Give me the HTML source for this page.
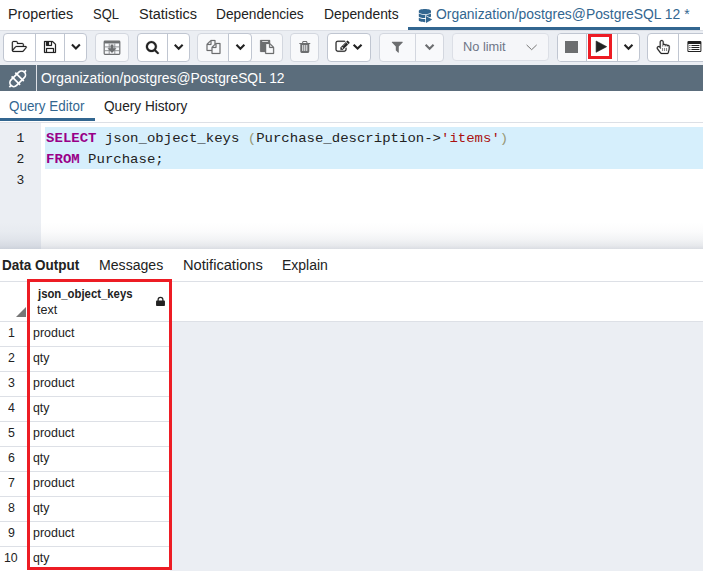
<!DOCTYPE html>
<html><head><meta charset="utf-8"><title>pgAdmin</title><style>
*{box-sizing:border-box;margin:0;padding:0}
html,body{width:703px;height:571px;overflow:hidden;background:#fff}
body{position:relative;font-family:"Liberation Sans",sans-serif;color:#222;font-size:14px}
.abs{position:absolute}
.ic{position:absolute;display:block;overflow:visible}
.t{position:absolute;white-space:nowrap;line-height:1}
.tab{font-size:14px;top:7px;color:#222}
.tab.act{color:#326690}
#toolbar{left:0;top:30px;width:703px;height:35px;background:#ebeef3;border-top:1px solid #dde0e6}
.grp{position:absolute;top:33px;height:29px;background:#fff;border:1px solid #c0c6d1;border-radius:4px}
.grp.dis{background:#f8f9fb;border-color:#d3d7df}
.dv{position:absolute;top:33px;height:29px;width:1px;background:#c0c6d1}
.dv.dis{background:#d3d7df}
#titlebar{left:0;top:65px;width:703px;height:26px;background:#5b6d7c}
#titlebar .sep{position:absolute;left:36px;top:0;width:1px;height:26px;background:#dde0e6}
#gutter{left:0;top:123px;width:41px;height:126px;background:#ebeef3}
.ln{position:absolute;left:0;width:24.4px;text-align:right;font-family:"Liberation Mono",monospace;font-size:13px;line-height:21px;color:#222}
.code{position:absolute;left:46.1px;transform:scaleY(0.94);transform-origin:0 14.24px;font-family:"Liberation Mono",monospace;font-size:14px;line-height:21px;white-space:pre;color:#222}
.kw{color:#908;font-weight:bold}
.br{color:#997}
.st{color:#a11}
.sel{position:absolute;left:45px;width:658px;background:#d6effc}
#shade{left:0;top:222px;width:703px;height:27px;background:linear-gradient(to bottom,rgba(132,142,160,0) 0%,rgba(132,142,160,0.03) 35%,rgba(132,142,160,0.10) 65%,rgba(132,142,160,0.20) 88%,rgba(132,142,160,0.30) 100%)}
.otab{font-size:14px;top:258px}
#grid{left:0;top:282px;width:703px;height:289px;background:#ebeef3}
.hl{position:absolute;height:1px;background:#dde0e6}
.cell{position:absolute;background:#fff;border-bottom:1px solid #dde0e6}
.rn{position:absolute;left:0;width:22.5px;text-align:center;font-size:12.4px;line-height:25px;color:#222}
.cv{position:absolute;left:33.5px;font-size:12.4px;line-height:25px;color:#222}
.red{position:absolute;border:3px solid #ed1c24}
</style></head><body>
<div class="t" style="left:8.33px;top:7.15px;font-size:14px;color:#222;transform:scaleX(1.0217);transform-origin:0 0">Properties</div>
<div class="t" style="left:92.92px;top:7.15px;font-size:14px;color:#222;transform:scaleX(0.9245);transform-origin:0 0">SQL</div>
<div class="t" style="left:138.55px;top:7.15px;font-size:14px;color:#222;transform:scaleX(1.0368);transform-origin:0 0">Statistics</div>
<div class="t" style="left:216.38px;top:7.15px;font-size:14px;color:#222;transform:scaleX(0.9789);transform-origin:0 0">Dependencies</div>
<div class="t" style="left:323.86px;top:7.15px;font-size:14px;color:#222;transform:scaleX(0.9884);transform-origin:0 0">Dependents</div>
<div class="t" style="left:436.35px;top:7.15px;font-size:14px;color:#326690;transform:scaleX(0.9915);transform-origin:0 0">Organization/postgres@PostgreSQL 12 *</div>
<svg class="ic" style="left:417px;top:8px;width:15px;height:16px" viewBox="417 8 15 16"><path fill="#326690" transform="translate(418.8 9.1) scale(0.027232 0.025586)" d="M448 73.143v45.714C448 159.143 347.667 192 224 192S0 159.143 0 118.857V73.143C0 32.857 100.333 0 224 0s224 32.857 224 73.143zM448 176v102.857C448 319.143 347.667 352 224 352S0 319.143 0 278.857V176c48.125 33.143 136.208 48.572 224 48.572S399.874 209.143 448 176zm0 160v102.857C448 479.143 347.667 512 224 512S0 479.143 0 438.857V336c48.125 33.143 136.208 48.572 224 48.572S399.874 369.143 448 336z"/></svg>
<svg class="ic" style="left:423px;top:13px;width:12px;height:13px" viewBox="423 13 12 13"><path d="M426 16.1 L432.2 19.5 L426 22.9Z" fill="#326690" stroke="#fff" stroke-width="1.5" stroke-linejoin="miter" paint-order="stroke"/></svg>
<div class="abs" style="left:408px;top:27px;width:292px;height:3px;background:#326690"></div>
<div class="abs" id="toolbar"></div>
<div class="grp" style="left:3px;width:84px"></div>
<div class="dv" style="left:35px"></div>
<div class="dv" style="left:64px"></div>
<div class="grp dis" style="left:95px;width:34px"></div>
<div class="grp" style="left:137px;width:53px"></div>
<div class="dv" style="left:167px"></div>
<div class="grp dis" style="left:197px;width:86px"></div>
<div class="grp dis" style="left:290px;width:29px"></div>
<div class="grp" style="left:327px;width:44px"></div>
<div class="grp dis" style="left:379px;width:65px"></div>
<div class="dv dis" style="left:415px"></div>
<div class="grp" style="left:557px;width:83px"></div>
<div class="dv" style="left:586px"></div>
<div class="dv" style="left:617px"></div>
<div class="grp" style="left:647px;width:73px"></div>
<div class="dv" style="left:678px"></div>
<div class="abs" style="left:228px;top:33px;width:24px;height:29px;background:#fff;border:1px solid #c0c6d1;border-radius:0 4px 4px 0"></div>
<div class="abs" style="left:452px;top:33px;width:97px;height:28px;background:#f5f6f9;border:1px solid #dcdfe6;border-radius:4px"></div>
<svg class="ic" style="left:10px;top:39px;width:18px;height:14px" viewBox="10 39 18 14"><path fill="#222" stroke="#222" stroke-width="30" stroke-linejoin="round" transform="translate(11.843 51.900) scale(0.007812 -0.007812)" d="M1781 605q0 35 -53 35h-1088q-40 0 -85.5 -21.5t-71.5 -52.5l-294 -363q-18 -24 -18 -40q0 -35 53 -35h1088q40 0 86 22t71 53l294 363q18 22 18 39zM640 768h768v160q0 40 -28 68t-68 28h-576q-40 0 -68 28t-28 68v64q0 40 -28 68t-68 28h-320q-40 0 -68 -28t-28 -68 v-853l256 315q44 53 116 87.5t140 34.5zM1909 605q0 -62 -46 -120l-295 -363q-43 -53 -116 -87.5t-140 -34.5h-1088q-92 0 -158 66t-66 158v960q0 92 66 158t158 66h320q92 0 158 -66t66 -158v-32h544q92 0 158 -66t66 -158v-160h192q54 0 99 -24.5t67 -70.5q15 -32 15 -68z "/></svg>
<svg class="ic" style="left:43px;top:39px;width:14px;height:15px" viewBox="43 39 14 15"><path fill="#222" stroke="#222" stroke-width="30" stroke-linejoin="round" transform="translate(44.000 51.900) scale(0.007812 -0.007812)" d="M384 0h768v384h-768v-384zM1280 0h128v896q0 14 -10 38.5t-20 34.5l-281 281q-10 10 -34 20t-39 10v-416q0 -40 -28 -68t-68 -28h-576q-40 0 -68 28t-28 68v416h-128v-1280h128v416q0 40 28 68t68 28h832q40 0 68 -28t28 -68v-416zM896 928v320q0 13 -9.5 22.5t-22.5 9.5 h-192q-13 0 -22.5 -9.5t-9.5 -22.5v-320q0 -13 9.5 -22.5t22.5 -9.5h192q13 0 22.5 9.5t9.5 22.5zM1536 896v-928q0 -40 -28 -68t-68 -28h-1344q-40 0 -68 28t-28 68v1344q0 40 28 68t68 28h928q40 0 88 -20t76 -48l280 -280q28 -28 48 -76t20 -88z"/></svg>
<svg class="ic" style="left:69px;top:42px;width:13px;height:10px" viewBox="69 42 13 10"><path d="M71.95 44.55 L75.90 48.50 L79.85 44.55" fill="none" stroke="#222" stroke-width="2.1" stroke-linejoin="miter"/></svg>
<svg class="ic" style="left:102px;top:39px;width:20px;height:18px" viewBox="102 39 20 18"><g transform="translate(103.6 40.6)"><g fill="none" stroke="#6c6e70"><rect x="0.6" y="0.6" width="15.6" height="13.2" rx="0.8" stroke-width="1.2"/><path d="M0.6 1.7 H16.2" stroke-width="2.3"/><path d="M0.6 6.3 H16.2 M0.6 10.1 H16.2 M5.6 3 V13.8 M11.2 3 V13.8" stroke-width="0.9" stroke="#85878a"/></g><path d="M7.0 3.8 H9.8 V7.6 H12.9 L8.4 12.4 L3.9 7.6 H7.0Z" fill="#6c6e70"/></g></svg>
<svg class="ic" style="left:144px;top:40px;width:16px;height:16px" viewBox="144 40 16 16"><path fill="#222" stroke="#222" stroke-width="30" stroke-linejoin="round" transform="translate(145.900 52.100) scale(0.007812 -0.007812)" d="M1152 704q0 185 -131.5 316.5t-316.5 131.5t-316.5 -131.5t-131.5 -316.5t131.5 -316.5t316.5 -131.5t316.5 131.5t131.5 316.5zM1664 -128q0 -52 -38 -90t-90 -38q-54 0 -90 38l-343 342q-179 -124 -399 -124q-143 0 -273.5 55.5t-225 150t-150 225t-55.5 273.5 t55.5 273.5t150 225t225 150t273.5 55.5t273.5 -55.5t225 -150t150 -225t55.5 -273.5q0 -220 -124 -399l343 -343q37 -37 37 -90z"/></svg>
<svg class="ic" style="left:172px;top:42px;width:13px;height:10px" viewBox="172 42 13 10"><path d="M174.75 44.75 L178.70 48.70 L182.65 44.75" fill="none" stroke="#222" stroke-width="2.1" stroke-linejoin="miter"/></svg>
<svg class="ic" style="left:205px;top:38px;width:17px;height:17px" viewBox="205 38 17 17"><path fill="#6c6e70" stroke="#6c6e70" stroke-width="30" stroke-linejoin="round" transform="translate(206.500 51.900) scale(0.007812 -0.007812)" d="M1696 1152q40 0 68 -28t28 -68v-1216q0 -40 -28 -68t-68 -28h-960q-40 0 -68 28t-28 68v288h-544q-40 0 -68 28t-28 68v672q0 40 20 88t48 76l408 408q28 28 76 48t88 20h416q40 0 68 -28t28 -68v-328q68 40 128 40h416zM1152 939l-299 -299h299v299zM512 1323l-299 -299 h299v299zM708 676l316 316v416h-384v-416q0 -40 -28 -68t-68 -28h-416v-640h512v256q0 40 20 88t48 76zM1664 -128v1152h-384v-416q0 -40 -28 -68t-68 -28h-416v-640h896z"/></svg>
<svg class="ic" style="left:234px;top:42px;width:13px;height:10px" viewBox="234 42 13 10"><path d="M236.45 44.85 L240.40 48.80 L244.35 44.85" fill="none" stroke="#222" stroke-width="2.1" stroke-linejoin="miter"/></svg>
<svg class="ic" style="left:259px;top:38px;width:17px;height:17px" viewBox="259 38 17 17"><path fill="#6c6e70" stroke="#6c6e70" stroke-width="30" stroke-linejoin="round" transform="translate(260.100 51.900) scale(0.007812 -0.007812)" d="M768 -128h896v640h-416q-40 0 -68 28t-28 68v416h-384v-1152zM1024 1312v64q0 13 -9.5 22.5t-22.5 9.5h-704q-13 0 -22.5 -9.5t-9.5 -22.5v-64q0 -13 9.5 -22.5t22.5 -9.5h704q13 0 22.5 9.5t9.5 22.5zM1280 640h299l-299 299v-299zM1792 512v-672q0 -40 -28 -68t-68 -28 h-960q-40 0 -68 28t-28 68v160h-544q-40 0 -68 28t-28 68v1344q0 40 28 68t68 28h1088q40 0 68 -28t28 -68v-328q21 -13 36 -28l408 -408q28 -28 48 -76t20 -88z"/></svg>
<svg class="ic" style="left:298px;top:39px;width:14px;height:15px" viewBox="298 39 14 15"><path fill="#6c6e70" transform="translate(299.300 51.900) scale(0.007812 -0.007812)" d="M512 160v704q0 14 -9 23t-23 9h-64q-14 0 -23 -9t-9 -23v-704q0 -14 9 -23t23 -9h64q14 0 23 9t9 23zM768 160v704q0 14 -9 23t-23 9h-64q-14 0 -23 -9t-9 -23v-704q0 -14 9 -23t23 -9h64q14 0 23 9t9 23zM1024 160v704q0 14 -9 23t-23 9h-64q-14 0 -23 -9t-9 -23v-704 q0 -14 9 -23t23 -9h64q14 0 23 9t9 23zM480 1152h448l-48 117q-7 9 -17 11h-317q-10 -2 -17 -11zM1408 1120v-64q0 -14 -9 -23t-23 -9h-96v-948q0 -83 -47 -143.5t-113 -60.5h-832q-66 0 -113 58.5t-47 141.5v952h-96q-14 0 -23 9t-9 23v64q0 14 9 23t23 9h309l70 167 q15 37 54 63t79 26h320q40 0 79 -26t54 -63l70 -167h309q14 0 23 -9t9 -23z"/></svg>
<svg class="ic" style="left:334px;top:39px;width:17px;height:14px" viewBox="334 39 17 14"><path fill="#222" stroke="#222" stroke-width="30" stroke-linejoin="round" transform="translate(335.531 51.700) scale(0.007812 -0.007812)" d="M888 352l116 116l-152 152l-116 -116v-56h96v-96h56zM1328 1072q-16 16 -33 -1l-350 -350q-17 -17 -1 -33t33 1l350 350q17 17 1 33zM1408 478v-190q0 -119 -84.5 -203.5t-203.5 -84.5h-832q-119 0 -203.5 84.5t-84.5 203.5v832q0 119 84.5 203.5t203.5 84.5h832 q63 0 117 -25q15 -7 18 -23q3 -17 -9 -29l-49 -49q-14 -14 -32 -8q-23 6 -45 6h-832q-66 0 -113 -47t-47 -113v-832q0 -66 47 -113t113 -47h832q66 0 113 47t47 113v126q0 13 9 22l64 64q15 15 35 7t20 -29zM1312 1216l288 -288l-672 -672h-288v288zM1756 1084l-92 -92 l-288 288l92 92q28 28 68 28t68 -28l152 -152q28 -28 28 -68t-28 -68z"/></svg>
<svg class="ic" style="left:351px;top:42px;width:13px;height:10px" viewBox="351 42 13 10"><path d="M353.65 44.65 L357.60 48.60 L361.55 44.65" fill="none" stroke="#222" stroke-width="2.1" stroke-linejoin="miter"/></svg>
<svg class="ic" style="left:390px;top:40px;width:14px;height:14px" viewBox="390 40 14 14"><path fill="#6c6e70" transform="translate(391.800 51.700) scale(0.007812 -0.007812)" d="M1403 1241q17 -41 -14 -70l-493 -493v-742q0 -42 -39 -59q-13 -5 -25 -5q-27 0 -45 19l-256 256q-19 19 -19 45v486l-493 493q-31 29 -14 70q17 39 59 39h1280q42 0 59 -39z"/></svg>
<svg class="ic" style="left:423px;top:42px;width:13px;height:10px" viewBox="423 42 13 10"><path d="M425.65 44.85 L429.60 48.80 L433.55 44.85" fill="none" stroke="#6c6e70" stroke-width="2.1" stroke-linejoin="miter"/></svg>
<div class="t" style="left:462.75px;top:41.24px;font-size:12px;color:#6e7587;transform:scaleX(1.0660);transform-origin:0 0">No limit</div>
<svg class="ic" style="left:524px;top:42px;width:16px;height:11px" viewBox="524 42 16 11"><path d="M526.6 44.9 L531.65 49.7 L536.7 44.9" fill="none" stroke="#777" stroke-width="1"/></svg>
<div class="abs" style="left:558px;top:34px;width:28px;height:27px;background:#f8f9fb;border-radius:3px 0 0 3px"></div>
<div class="abs" style="left:565px;top:41px;width:12.5px;height:12px;background:#6c6e70"></div>
<svg class="ic" style="left:594px;top:39px;width:15px;height:16px" viewBox="594 39 15 16"><path d="M596.1 41 L606.7 46.65 L596.1 52.3Z" fill="#222" stroke="#222" stroke-width="0.6" stroke-linejoin="round"/></svg>
<svg class="ic" style="left:622px;top:42px;width:13px;height:10px" viewBox="622 42 13 10"><path d="M624.55 44.75 L628.50 48.70 L632.45 44.75" fill="none" stroke="#222" stroke-width="2.1" stroke-linejoin="miter"/></svg>
<svg class="ic" style="left:655px;top:39px;width:16px;height:16px" viewBox="655 39 16 16"><path fill="#222" stroke="#222" stroke-width="30" stroke-linejoin="round" transform="translate(656.700 52.000) scale(0.007812 -0.007812)" d="M640 1408q-53 0 -90.5 -37.5t-37.5 -90.5v-512v-384l-151 202q-41 54 -107 54q-52 0 -89 -38t-37 -90q0 -43 26 -77l384 -512q38 -51 102 -51h718q22 0 39.5 13.5t22.5 34.5l92 368q24 96 24 194v217q0 41 -28 71t-68 30t-68 -28t-28 -68h-32v61q0 48 -32 81.5t-80 33.5 q-46 0 -79 -33t-33 -79v-64h-32v90q0 55 -37 94.5t-91 39.5q-53 0 -90.5 -37.5t-37.5 -90.5v-96h-32v570q0 55 -37 94.5t-91 39.5zM640 1536q107 0 181.5 -77.5t74.5 -184.5v-220q22 2 32 2q99 0 173 -69q47 21 99 21q113 0 184 -87q27 7 56 7q94 0 159 -67.5t65 -161.5 v-217q0 -116 -28 -225l-92 -368q-16 -64 -68 -104.5t-118 -40.5h-718q-60 0 -114.5 27.5t-90.5 74.5l-384 512q-51 68 -51 154q0 105 74.5 180.5t179.5 75.5q71 0 130 -35v547q0 106 75 181t181 75zM768 128v384h-32v-384h32zM1024 128v384h-32v-384h32zM1280 128v384h-32 v-384h32z"/></svg>
<svg class="ic" style="left:686px;top:40px;width:17px;height:13px" viewBox="686 40 17 13"><path fill="#222" transform="translate(687.400 52.000) scale(0.007812 -0.007812)" d="M384 352v-64q0 -13 -9.5 -22.5t-22.5 -9.5h-64q-13 0 -22.5 9.5t-9.5 22.5v64q0 13 9.5 22.5t22.5 9.5h64q13 0 22.5 -9.5t9.5 -22.5zM384 608v-64q0 -13 -9.5 -22.5t-22.5 -9.5h-64q-13 0 -22.5 9.5t-9.5 22.5v64q0 13 9.5 22.5t22.5 9.5h64q13 0 22.5 -9.5t9.5 -22.5z M384 864v-64q0 -13 -9.5 -22.5t-22.5 -9.5h-64q-13 0 -22.5 9.5t-9.5 22.5v64q0 13 9.5 22.5t22.5 9.5h64q13 0 22.5 -9.5t9.5 -22.5zM1536 352v-64q0 -13 -9.5 -22.5t-22.5 -9.5h-960q-13 0 -22.5 9.5t-9.5 22.5v64q0 13 9.5 22.5t22.5 9.5h960q13 0 22.5 -9.5t9.5 -22.5z M1536 608v-64q0 -13 -9.5 -22.5t-22.5 -9.5h-960q-13 0 -22.5 9.5t-9.5 22.5v64q0 13 9.5 22.5t22.5 9.5h960q13 0 22.5 -9.5t9.5 -22.5zM1536 864v-64q0 -13 -9.5 -22.5t-22.5 -9.5h-960q-13 0 -22.5 9.5t-9.5 22.5v64q0 13 9.5 22.5t22.5 9.5h960q13 0 22.5 -9.5 t9.5 -22.5zM1664 160v832q0 13 -9.5 22.5t-22.5 9.5h-1472q-13 0 -22.5 -9.5t-9.5 -22.5v-832q0 -13 9.5 -22.5t22.5 -9.5h1472q13 0 22.5 9.5t9.5 22.5zM1792 1248v-1088q0 -66 -47 -113t-113 -47h-1472q-66 0 -113 47t-47 113v1088q0 66 47 113t113 47h1472q66 0 113 -47 t47 -113z"/></svg>
<div class="red" style="left:588px;top:34px;width:24px;height:25px"></div>
<div class="abs" id="titlebar"><div class="sep"></div></div>
<svg class="ic" style="left:6px;top:67px;width:24px;height:24px" viewBox="6 67 24 24"><g transform="translate(17.7 78.8) rotate(-45)" fill="none" stroke="#fff" stroke-width="1.7"><rect x="-9.4" y="-3.9" width="18.8" height="7.8" rx="3.9"/><line x1="-2.6" y1="-6" x2="-2.6" y2="6"/><line x1="2.6" y1="-6" x2="2.6" y2="6"/><line x1="-11.8" y1="0" x2="-9.4" y2="0"/><line x1="9.4" y1="0" x2="11.8" y2="0"/></g></svg>
<div class="t" style="left:40.65px;top:71.25px;font-size:14px;color:#fff;transform:scaleX(0.9885);transform-origin:0 0">Organization/postgres@PostgreSQL 12</div>
<div class="t" style="left:9.07px;top:99.15px;font-size:14px;color:#326690;transform:scaleX(0.9588);transform-origin:0 0">Query Editor</div>
<div class="t" style="left:104.26px;top:99.15px;font-size:14px;color:#222;transform:scaleX(0.9730);transform-origin:0 0">Query History</div>
<div class="abs" style="left:0;top:122px;width:703px;height:1px;background:#dde0e6"></div>
<div class="abs" style="left:0;top:118px;width:95px;height:3px;background:#326690"></div>
<div class="abs" id="gutter"></div>
<div class="sel" style="top:127px;height:42px"></div>
<div class="ln" style="top:128px">1</div>
<div class="ln" style="top:149px">2</div>
<div class="ln" style="top:170px">3</div>
<div class="code" id="c1" style="top:128px"><span class="kw">SELECT</span> json_object_keys <span class="br">(</span>Purchase_description-&gt;<span class="st">'items'</span><span class="br">)</span></div>
<div class="code" id="c2" style="top:149px"><span class="kw">FROM</span> Purchase;</div>
<div class="abs" id="shade"></div>
<div class="t" style="left:2.00px;top:258.25px;font-size:14px;color:#222;font-weight:bold;transform:scaleX(0.9644);transform-origin:0 0">Data Output</div>
<div class="t" style="left:98.74px;top:258.25px;font-size:14px;color:#222;transform:scaleX(1.0072);transform-origin:0 0">Messages</div>
<div class="t" style="left:182.60px;top:258.25px;font-size:14px;color:#222;transform:scaleX(1.0468);transform-origin:0 0">Notifications</div>
<div class="t" style="left:281.75px;top:258.25px;font-size:14px;color:#222;transform:scaleX(0.9986);transform-origin:0 0">Explain</div>
<div class="abs" style="left:0;top:281px;width:703px;height:1px;background:#dde0e6"></div>
<div class="abs" id="grid"></div>
<div class="abs" style="left:0;top:282px;width:703px;height:39px;background:#fff"></div>
<div class="abs" style="left:0;top:321px;width:703px;height:1px;background:#dde0e6"></div>
<div class="abs" style="left:0;top:322px;width:170px;height:249px;background:#fff"></div>
<div class="t" style="left:7.59px;top:326.64px;font-size:12px;color:#222;transform:scaleX(1.0300);transform-origin:0 0">1</div>
<div class="t" style="left:32.80px;top:326.64px;font-size:12px;color:#222;transform:scaleX(1.0367);transform-origin:0 0">product</div>
<div class="hl" style="left:0;top:346px;width:170px"></div>
<div class="t" style="left:7.77px;top:351.64px;font-size:12px;color:#222;transform:scaleX(1.0300);transform-origin:0 0">2</div>
<div class="t" style="left:33.08px;top:351.64px;font-size:12px;color:#222;transform:scaleX(1.0300);transform-origin:0 0">qty</div>
<div class="hl" style="left:0;top:371px;width:170px"></div>
<div class="t" style="left:7.80px;top:376.64px;font-size:12px;color:#222;transform:scaleX(1.0300);transform-origin:0 0">3</div>
<div class="t" style="left:32.80px;top:376.64px;font-size:12px;color:#222;transform:scaleX(1.0367);transform-origin:0 0">product</div>
<div class="hl" style="left:0;top:396px;width:170px"></div>
<div class="t" style="left:7.80px;top:401.64px;font-size:12px;color:#222;transform:scaleX(1.0300);transform-origin:0 0">4</div>
<div class="t" style="left:33.08px;top:401.64px;font-size:12px;color:#222;transform:scaleX(1.0300);transform-origin:0 0">qty</div>
<div class="hl" style="left:0;top:421px;width:170px"></div>
<div class="t" style="left:7.77px;top:426.64px;font-size:12px;color:#222;transform:scaleX(1.0300);transform-origin:0 0">5</div>
<div class="t" style="left:32.80px;top:426.64px;font-size:12px;color:#222;transform:scaleX(1.0367);transform-origin:0 0">product</div>
<div class="hl" style="left:0;top:446px;width:170px"></div>
<div class="t" style="left:7.72px;top:451.64px;font-size:12px;color:#222;transform:scaleX(1.0300);transform-origin:0 0">6</div>
<div class="t" style="left:33.08px;top:451.64px;font-size:12px;color:#222;transform:scaleX(1.0300);transform-origin:0 0">qty</div>
<div class="hl" style="left:0;top:471px;width:170px"></div>
<div class="t" style="left:7.76px;top:476.64px;font-size:12px;color:#222;transform:scaleX(1.0300);transform-origin:0 0">7</div>
<div class="t" style="left:32.80px;top:476.64px;font-size:12px;color:#222;transform:scaleX(1.0367);transform-origin:0 0">product</div>
<div class="hl" style="left:0;top:496px;width:170px"></div>
<div class="t" style="left:7.77px;top:501.64px;font-size:12px;color:#222;transform:scaleX(1.0300);transform-origin:0 0">8</div>
<div class="t" style="left:33.08px;top:501.64px;font-size:12px;color:#222;transform:scaleX(1.0300);transform-origin:0 0">qty</div>
<div class="hl" style="left:0;top:521px;width:170px"></div>
<div class="t" style="left:7.77px;top:526.64px;font-size:12px;color:#222;transform:scaleX(1.0300);transform-origin:0 0">9</div>
<div class="t" style="left:32.80px;top:526.64px;font-size:12px;color:#222;transform:scaleX(1.0367);transform-origin:0 0">product</div>
<div class="hl" style="left:0;top:546px;width:170px"></div>
<div class="t" style="left:4.06px;top:551.64px;font-size:12px;color:#222;transform:scaleX(1.0270);transform-origin:0 0">10</div>
<div class="t" style="left:33.08px;top:551.64px;font-size:12px;color:#222;transform:scaleX(1.0300);transform-origin:0 0">qty</div>
<svg class="ic" style="left:16px;top:307px;width:10px;height:10px" viewBox="0 0 10 10"><path d="M10 0 L10 10 L0 10Z" fill="#777"/></svg>
<div class="t" style="left:37.58px;top:288.24px;font-size:12px;color:#222;font-weight:bold;transform:scaleX(0.9444);transform-origin:0 0">json_object_keys</div>
<div class="t" style="left:37.22px;top:303.94px;font-size:12px;color:#222;transform:scaleX(1.0431);transform-origin:0 0">text</div>
<svg class="ic" style="left:155px;top:295px;width:11px;height:13px" viewBox="155 295 11 13"><g transform="translate(156.05 296.6)"><rect x="0" y="4" width="8.9" height="5.5" rx="0.8" fill="#222"/><path d="M2.05 4.3 V3.1 a2.4 2.4 0 0 1 4.8 0 V4.3" fill="none" stroke="#222" stroke-width="1.25"/></g></svg>
<div class="red" style="left:27px;top:279px;width:145px;height:291px"></div>
</body></html>
